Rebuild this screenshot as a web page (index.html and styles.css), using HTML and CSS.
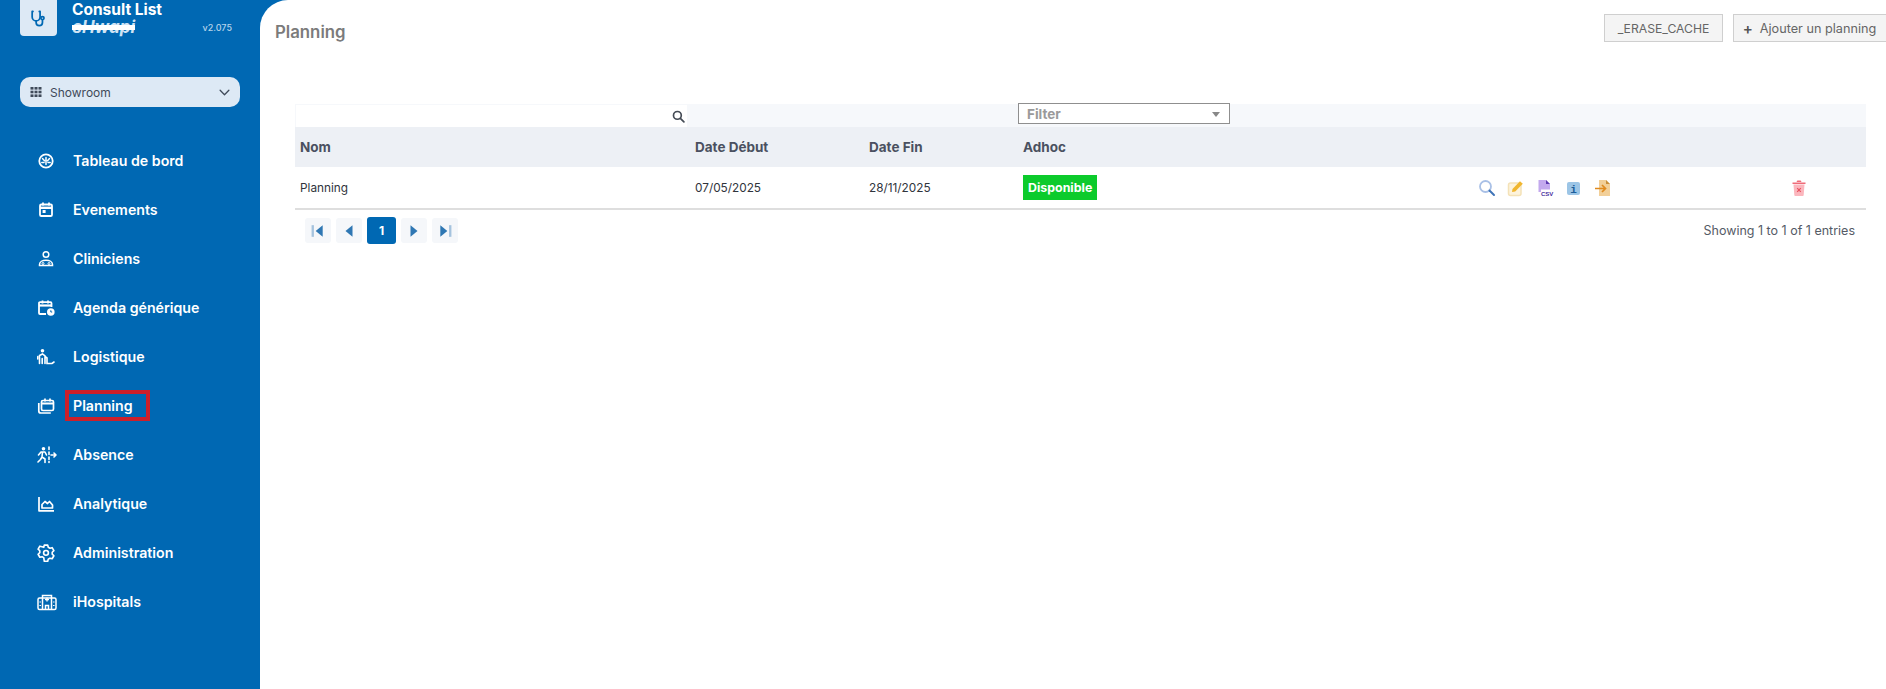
FILE: index.html
```html
<!DOCTYPE html>
<html lang="fr">
<head>
<meta charset="utf-8">
<title>Planning</title>
<link rel="stylesheet" href="styles.css">
</head>
<body>
<div class="app">
  <aside class="sidebar">
    <div class="brand">
      <div class="brand-logo">
        <svg viewBox="0 0 24 24" width="19" height="19" fill="none" stroke="#0068b3" stroke-width="2.200" stroke-linecap="round" stroke-linejoin="round"><path d="M5 3H4v7a5 5 0 0 0 10 0V3h-1"/><path d="M9 15v2a4 4 0 0 0 8 0v-3"/><circle cx="17" cy="11.500" r="2"/></svg>
      </div>
      <div class="brand-text">
        <div class="brand-title">Consult List</div>
        <div class="brand-row">
          <span class="brand-sub">eHwapi</span>
          <span class="brand-version">v2.075</span>
        </div>
      </div>
    </div>
    <div class="org-select">
      <svg class="org-grid" viewBox="0 0 12 12" width="12" height="12" fill="#3f4a59"><rect x="0.500" y="1" width="3" height="2.600"/><rect x="4.500" y="1" width="3" height="2.600"/><rect x="8.500" y="1" width="3" height="2.600"/><rect x="0.500" y="4.700" width="3" height="2.600"/><rect x="4.500" y="4.700" width="3" height="2.600"/><rect x="8.500" y="4.700" width="3" height="2.600"/><rect x="0.500" y="8.400" width="3" height="2.600"/><rect x="4.500" y="8.400" width="3" height="2.600"/><rect x="8.500" y="8.400" width="3" height="2.600"/></svg>
      <span class="org-name">Showroom</span>
      <svg class="org-chevron" viewBox="0 0 12 8" width="11" height="7" fill="none" stroke="#3f4a59" stroke-width="1.500" stroke-linecap="round" stroke-linejoin="round"><path d="M1 1.500l5 5 5-5"/></svg>
    </div>
    <nav class="nav">
      <a class="nav-item"><span class="nav-icon"><svg viewBox="0 0 18 18" width="18" height="18" fill="none" stroke="#fff" stroke-width="1.800" stroke-linecap="round"><circle cx="9" cy="9" r="6.700"/><path d="M9 5.500v7M5.500 6.500l2 2.200M12.500 6.500l-2 2.200M4.800 10.500h2.200M11 10.500h2.200" stroke-width="1.500"/></svg></span><span>Tableau de bord</span></a>
      <a class="nav-item"><span class="nav-icon"><svg viewBox="0 0 18 18" width="18" height="18" fill="none" stroke="#fff" stroke-width="1.800"><rect x="3" y="3.500" width="12" height="11.500" rx="1.300"/><path d="M3 6.800h12" stroke-width="2.400"/><path d="M6 1.500v3M12 1.500v3"/><rect x="5.600" y="9" width="3" height="3" fill="#fff" stroke="none"/></svg></span><span>Evenements</span></a>
      <a class="nav-item"><span class="nav-icon"><svg viewBox="0 0 18 18" width="18" height="18" fill="none" stroke="#fff" stroke-width="1.500"><circle cx="9" cy="4.500" r="2.800"/><path d="M2.500 15.500v-1c0-2.600 3-4.200 6.500-4.200s6.500 1.600 6.500 4.200v1z"/><circle cx="6" cy="13.500" r="1" stroke-width="1"/><circle cx="12" cy="13.500" r="1" stroke-width="1"/></svg></span><span>Cliniciens</span></a>
      <a class="nav-item"><span class="nav-icon"><svg viewBox="0 0 18 18" width="18" height="18" fill="none" stroke="#fff" stroke-width="1.800"><path d="M9 15H3a1 1 0 0 1-1-1V4.200a1 1 0 0 1 1-1h10.500a1 1 0 0 1 1 1V8"/><path d="M2 6.500h12.500" stroke-width="2.200"/><path d="M5.500 1.500v3M11 1.500v3"/><circle cx="13.800" cy="13" r="3.800" fill="#fff" stroke="none"/><path d="M13.800 11.300V13h1.400" stroke="#0068b3" stroke-width="1"/></svg></span><span>Agenda générique</span></a>
      <a class="nav-item"><span class="nav-icon"><svg viewBox="0 0 18 18" width="18" height="18" fill="none" stroke="#fff" stroke-width="1.600" stroke-linecap="round"><circle cx="5.500" cy="2.800" r="1.800" fill="#fff" stroke="none"/><path d="M2.500 15.500V7.500l3-1.500 2.500 2v7.500M5.200 10.500v5M8 8.500l2 1.500v5.500h5l2-1.500"/><path d="M.8 11V8.500"/></svg></span><span>Logistique</span></a>
      <a class="nav-item"><span class="nav-icon"><svg viewBox="0 0 18 18" width="18" height="18" fill="none" stroke="#fff" stroke-width="1.700"><rect x="4.500" y="3.500" width="12" height="10" rx="1.500"/><path d="M4.500 6.500h12" stroke-width="2"/><path d="M8 1.500v3M13 1.500v3"/><path d="M1.800 6v8a2 2 0 0 0 2 2h10"/></svg></span><span class="nav-marked">Planning</span></a>
      <a class="nav-item"><span class="nav-icon"><svg viewBox="0 0 20 18" width="20" height="18" fill="none" stroke="#fff" stroke-width="1.600" stroke-linecap="round" stroke-linejoin="round"><circle cx="6.500" cy="2.800" r="1.800" fill="#fff" stroke="none"/><path d="M1.500 9l2.500-3h4l1.500 3M5.500 6l-.5 5 3 2v3.500M5 11l-1.500 2.500-2.500 2.500"/><path d="M12 1v2.500M12 6v2.500M12 11v2.500M12 15.500v1"/><path d="M14 9h5M17 7l2 2-2 2"/></svg></span><span>Absence</span></a>
      <a class="nav-item"><span class="nav-icon"><svg viewBox="0 0 18 18" width="18" height="18" fill="none" stroke="#fff" stroke-width="1.700" stroke-linejoin="round"><path d="M2 2v13.800h15"/><path d="M5 13v-3.500l3-3 2.500 2 2-2 3 3.500v3z"/></svg></span><span>Analytique</span></a>
      <a class="nav-item"><span class="nav-icon"><svg viewBox="0 0 24 24" width="18" height="18" fill="none" stroke="#fff" stroke-width="2.200" stroke-linecap="round" stroke-linejoin="round"><path d="M9.700 2.500h4.600l.7 2.900 2.300 1.300 2.900-.8 2.300 4-2.200 2.100v2.600l2.200 2.100-2.300 4-2.900-.8-2.300 1.300-.7 2.800H9.700L9 19.200l-2.300-1.300-2.900.8-2.300-4L3.700 12.600V10L1.500 7.900l2.300-4 2.900.8L9 5.400z" transform="translate(0 -1)"/><circle cx="12" cy="11.800" r="3.200"/></svg></span><span>Administration</span></a>
      <a class="nav-item"><span class="nav-icon"><svg viewBox="0 0 20 18" width="20" height="18" fill="none" stroke="#fff" stroke-width="1.500"><rect x="1" y="5" width="18" height="11.500" rx="1.500"/><path d="M5.500 16.500V2.500h9v14"/><path d="M10 4.500v4M8 6.500h4" stroke-width="1.400"/><path d="M8.500 16.500v-4h3v4M3.200 8.500v1M3.200 12v1M16.800 8.500v1M16.800 12v1"/></svg></span><span>iHospitals</span></a>
    </nav>
  </aside>
  <main class="main">
    <header class="topbar">
      <h1 class="page-title">Planning</h1>
      <div class="top-actions">
        <button class="btn btn-erase">_ERASE_CACHE</button>
        <button class="btn btn-add"><span class="btn-plus">+</span>Ajouter un planning</button>
      </div>
    </header>
    <section class="card">
      <table class="grid">
        <colgroup><col class="c-name"><col class="c-start"><col class="c-end"><col class="c-adhoc"><col class="c-actions"><col class="c-del"></colgroup>
        <thead>
          <tr class="filters">
            <td class="filter-search"><div class="search-box"><svg viewBox="0 0 14 14" width="13" height="13" fill="none" stroke="#444b55" stroke-width="1.800"><circle cx="5.800" cy="5.800" r="4.200"/><path d="M9 9l3.800 3.800" stroke-linecap="round"/></svg></div></td>
            <td></td>
            <td></td>
            <td><div class="filter-select"><span>Filter</span><i class="caret"></i></div></td>
            <td></td>
            <td></td>
          </tr>
          <tr class="heads">
            <th>Nom</th><th>Date Début</th><th>Date Fin</th><th>Adhoc</th><th></th><th></th>
          </tr>
        </thead>
        <tbody>
          <tr class="row">
            <td>Planning</td>
            <td>07/05/2025</td>
            <td>28/11/2025</td>
            <td><span class="badge">Disponible</span></td>
            <td>
              <div class="actions">
                <svg viewBox="0 0 18 18" width="18" height="18" fill="none"><circle cx="7.500" cy="7.500" r="5.500" stroke="#a9c0e6" stroke-width="1.800"/><path d="M11.500 11.500l4.500 4.500" stroke="#3f74b8" stroke-width="2" stroke-linecap="round"/></svg>
                <svg viewBox="0 0 18 18" width="18" height="18" fill="none"><rect x="1.500" y="4" width="12.500" height="12.500" rx="2" fill="#fdf3dc" stroke="#f4e2b8" stroke-width="1.500"/><path d="M5.500 10L13 2.200l2.800 2.600L8.200 12.500l-3.200.6z" fill="#f0b62f"/></svg>
                <svg viewBox="0 0 18 18" width="18" height="18"><path d="M2.500 1h7.500l4 4v8H2.500z" fill="#c3a9ee"/><path d="M10 1l4 4h-4z" fill="#5d3ab0"/><rect x="5" y="10.500" width="12" height="7" fill="#fff"/><text x="5" y="17" class="csv-label">CSV</text></svg>
                <svg viewBox="0 0 18 18" width="18" height="18"><rect x="2" y="3" width="13" height="13" rx="2" fill="#9cc5e6"/><text x="8.500" y="13.500" class="info-label">i</text></svg>
                <svg viewBox="0 0 18 18" width="18" height="18" fill="none"><path d="M5 1h7l4 4v12H5z" fill="#f2cf98"/><path d="M12 1l4 4h-4z" fill="#c98f3a"/><path d="M1 9.500h10M8 6l3.500 3.500L8 13" stroke="#e08a1e" stroke-width="1.700"/></svg>
              </div>
            </td>
            <td>
              <svg class="trash" viewBox="0 0 18 18" width="18" height="18"><path d="M2.500 3.500h13v1.500h-13z" fill="#ef6b78"/><path d="M6.500 3l.8-1.500h3.400L11.500 3z" fill="#ef6b78"/><path d="M3.500 5.500h11l-.8 10.500a1 1 0 0 1-1 1H5.300a1 1 0 0 1-1-1z" fill="#fbb6bd"/><path d="M7.200 9.200l3.600 3.600M10.800 9.200l-3.600 3.600" stroke="#e8505f" stroke-width="1.200"/></svg>
            </td>
          </tr>
        </tbody>
      </table>
      <div class="table-foot">
        <div class="pager">
          <span class="pg"><svg viewBox="0 0 12 12" width="14" height="14"><rect x="0.500" y="1" width="2" height="10" fill="#a5c3de"/><path d="M10 1v10L4 6z" fill="#2f77b3"/></svg></span>
          <span class="pg"><svg viewBox="0 0 12 12" width="14" height="14"><path d="M9 1v10L3 6z" fill="#2f77b3"/></svg></span>
          <span class="pg pg-active">1</span>
          <span class="pg"><svg viewBox="0 0 12 12" width="14" height="14"><path d="M3 1v10l6-5z" fill="#2f77b3"/></svg></span>
          <span class="pg"><svg viewBox="0 0 12 12" width="14" height="14"><path d="M2 1v10l6-5z" fill="#2f77b3"/><rect x="9.500" y="1" width="2" height="10" fill="#a5c3de"/></svg></span>
        </div>
        <div class="info">Showing 1 to 1 of 1 entries</div>
      </div>
    </section>
  </main>
</div>
</body>
</html>
```
FILE: styles.css
```css
* { box-sizing: border-box; }
html, body { margin: 0; height: 100%; overflow: hidden; }
body { font-family: "Inter", "Liberation Sans", sans-serif; color: #2f3540; background: #0068b3; }
.app { display: flex; height: 689px; }

.sidebar { width: 260px; flex: none; background: #0068b3; color: #fff; padding: 0 20px; }
.brand { display: flex; height: 36px; gap: 15px; }
.brand-logo { width: 37px; height: 36px; background: #dde9f5; border-radius: 0 0 4px 4px; display: flex; align-items: center; justify-content: center; }
.brand-text { flex: 1; padding-right: 8px; padding-top: 1px; }
.brand-title { font-size: 15.500px; font-weight: 700; line-height: 17px; }
.brand-row { display: flex; justify-content: space-between; align-items: center; height: 18px; }
.brand-sub { font-size: 17px; font-weight: 700; font-style: italic; color: #cfe3f4; text-decoration: line-through; text-decoration-thickness: 5px; text-decoration-color: #fff; line-height: 18px; }
.brand-version { font-size: 9px; font-weight: 500; color: #b5d3ea; margin-top: 1px; }

.org-select { display: flex; align-items: center; height: 30px; margin-top: 41px; padding: 0 10px; background: #dde9f5; border-radius: 10px; color: #3f4a59; font-size: 12px; }
.org-name { margin-left: 8px; flex: 1; }

.nav { display: flex; flex-direction: column; padding-top: 29px; }
.nav-item { display: flex; align-items: center; height: 49px; font-size: 14.200px; font-weight: 600; color: #fff; }
.nav-icon { width: 53px; padding-left: 17px; display: flex; align-items: center; flex: none; }
.nav-marked { outline: 4px solid #cc1f2a; padding: 2px 13px 2px 4px; margin: 0 -13px 0 -4px; line-height: 19px; }

.main { flex: 1; min-width: 0; background: #fff; border-top-left-radius: 28px; overflow: hidden; }
.topbar { display: flex; justify-content: space-between; height: 104px; padding: 14px 0 0 15px; }
.page-title { margin: 8px 0 0; font-size: 16.800px; font-weight: 600; color: #7b7b7b; line-height: 20px; }
.top-actions { display: flex; gap: 10px; margin-right: -14px; }
.btn { height: 28px; background: #f4f4f4; border: 1px solid #cfcfcf; font: 400 12.700px "Inter", "Liberation Sans", sans-serif; color: #666; }
.btn-erase { width: 119px; padding: 0; font-size: 12.200px; }
.btn-add { width: 167px; padding: 0 14px 0 0; }
.btn-plus { font-size: 15px; font-weight: 600; margin-right: 7px; color: #555; vertical-align: -1px; }

.card { margin: 0 20px 0 35px; }
.grid { width: 100%; border-collapse: collapse; table-layout: fixed; font-size: 11.800px; }
.c-name { width: 395px; }
.c-start { width: 174px; }
.c-end { width: 154px; }
.c-adhoc { width: 452px; }
.c-actions { width: 310px; }
.grid td, .grid th { padding: 0 5px; text-align: left; vertical-align: middle; }
.filters { height: 23px; background: #f6f8fb; }
.grid .filters td { vertical-align: top; padding: 0; }
.search-box { height: 22px; margin: 1px 3px 0 1px; background: #fff; display: flex; align-items: center; justify-content: flex-end; padding-right: 2px; }
.filter-select { display: flex; align-items: center; justify-content: space-between; width: 212px; height: 21px; margin-top: -1px; padding: 1px 9px 0 8px; background: #fff; border: 1px solid #8f8f8f; color: #9a9a9a; font-size: 13.500px; font-weight: 700; }
.caret { width: 0; height: 0; border-left: 4px solid transparent; border-right: 4px solid transparent; border-top: 5px solid #888; }
.heads { height: 40px; background: #edf0f5; }
.heads th { font-size: 13.500px; font-weight: 700; color: #4a5060; }
.row { height: 42px; border-bottom: 2px solid #dedede; color: #30343c; }
.badge { display: inline-block; padding: 0 5px; height: 25px; line-height: 25px; background: #0ccb2c; color: #fff; font-size: 12.400px; font-weight: 700; }
.actions { display: flex; gap: 11px; margin-left: 3px; align-items: center; }
.csv-label { font: 700 6px "Liberation Sans", sans-serif; fill: #4a2fa0; }
.info-label { font: 700 11px "Liberation Mono", monospace; fill: #1d5e9a; text-anchor: middle; }
.trash { display: block; margin-left: 5px; }

.table-foot { display: flex; justify-content: space-between; align-items: center; height: 36px; padding: 5px 11px 0 10px; }
.pager { display: flex; gap: 5px; align-items: center; }
.pg { width: 26px; height: 25px; background: #f5f7fa; border-radius: 3px; display: flex; align-items: center; justify-content: center; }
.pg-active { width: 29px; height: 27px; background: #0068b3; color: #fff; font-size: 12px; font-weight: 700; }
.info { font-size: 12.500px; color: #555b66; }
```
